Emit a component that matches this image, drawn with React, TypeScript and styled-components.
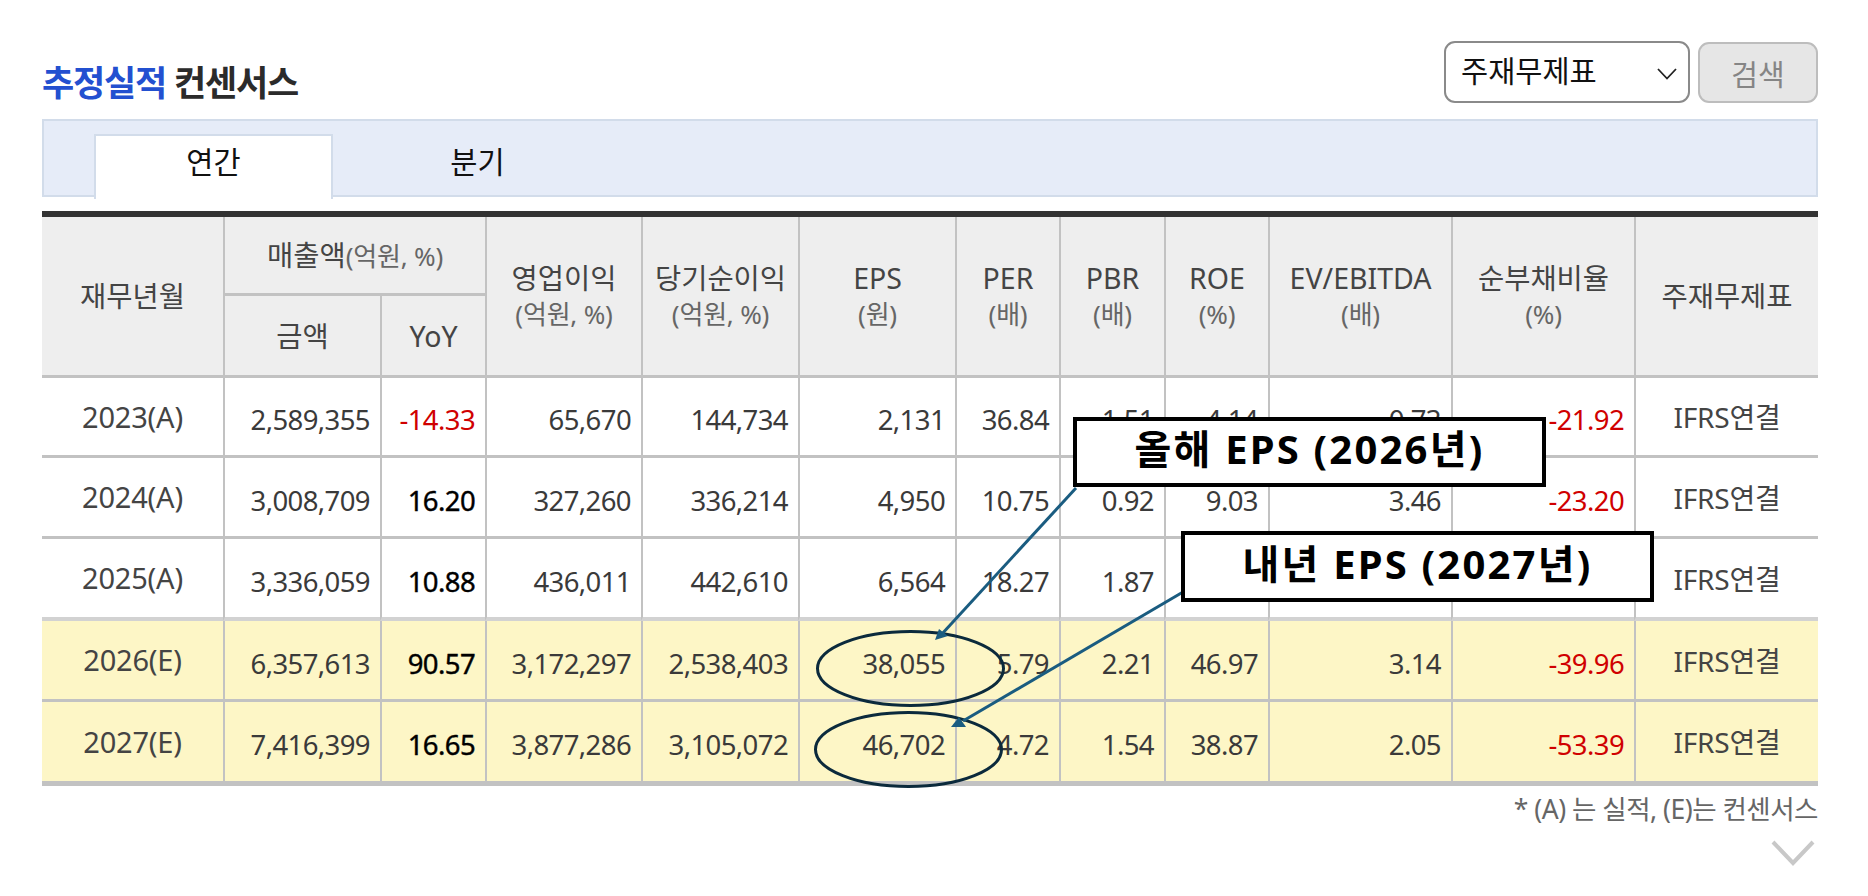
import styled, { createGlobalStyle } from "styled-components";

const FONT = `"Noto Sans", "Noto Sans CJK KR", sans-serif`;
const LINE = "#c2c2c2";

const columns = [181, 157, 105, 156, 157, 157, 104, 105, 104, 183, 183, 184];

const rows = [
  { year: "2023(A)", sales: "2,589,355", yoy: "-14.33", op: "65,670", net: "144,734", eps: "2,131", per: "36.84", pbr: "1.51", roe: "4.14", ev: "0.73", debt: "-21.92", h: 80 },
  { year: "2024(A)", sales: "3,008,709", yoy: "16.20", op: "327,260", net: "336,214", eps: "4,950", per: "10.75", pbr: "0.92", roe: "9.03", ev: "3.46", debt: "-23.20", h: 81 },
  { year: "2025(A)", sales: "3,336,059", yoy: "10.88", op: "436,011", net: "442,610", eps: "6,564", per: "18.27", pbr: "1.87", roe: "10.85", ev: "3.38", debt: "-28.44", h: 82, last: true },
  { year: "2026(E)", sales: "6,357,613", yoy: "90.57", op: "3,172,297", net: "2,538,403", eps: "38,055", per: "5.79", pbr: "2.21", roe: "46.97", ev: "3.14", debt: "-39.96", h: 81, est: true },
  { year: "2027(E)", sales: "7,416,399", yoy: "16.65", op: "3,877,286", net: "3,105,072", eps: "46,702", per: "4.72", pbr: "1.54", roe: "38.87", ev: "2.05", debt: "-53.39", h: 84, est: true, end: true },
];

const GlobalStyle = createGlobalStyle`
  * { box-sizing: border-box; }
  html, body { margin: 0; padding: 0; background: #fff; }
  body { font-family: ${FONT}; color: #333; }
`;

const Page = styled.div`
  position: relative;
  width: 1868px;
  height: 896px;
  padding: 41px 50px 0 42px;
  overflow: hidden;
`;

const TitleBar = styled.div`
  display: flex;
  justify-content: space-between;
  align-items: flex-end;
  height: 62px;
`;

const Title = styled.h2`
  margin: 0 0 -2px;
  font-size: 35px;
  line-height: 44px;
  font-weight: 700;
  letter-spacing: -1.2px;
  color: #2b2b2b;

  em {
    font-style: normal;
    color: #2350d0;
  }
`;

const SearchForm = styled.div`
  display: flex;
  gap: 8px;
`;

const SelectWrap = styled.div`
  position: relative;
  width: 246px;
  height: 62px;

  svg {
    position: absolute;
    right: 12px;
    top: 26px;
  }
`;

const Select = styled.select`
  appearance: none;
  width: 100%;
  height: 100%;
  padding: 0 0 4px 15px;
  border: 2px solid #8a8a8a;
  border-radius: 11px;
  background: #fff;
  color: #111;
  font-family: ${FONT};
  font-size: 29.5px;
`;

const SearchButton = styled.button`
  width: 120px;
  height: 61px;
  margin-top: 1px;
  border: 2px solid #bdbdbd;
  border-radius: 11px;
  background: #e6e6e6;
  color: #858585;
  font-family: ${FONT};
  font-size: 29px;
`;

const TabBand = styled.div`
  display: flex;
  gap: 25px;
  height: 78px;
  margin-top: 16px;
  padding: 13px 0 0 50px;
  border: 2px solid #d2dcea;
  background: #e6ecf8;
`;

const Tab = styled.div<{ $active?: boolean }>`
  width: 239px;
  height: 65px;
  margin-bottom: -2px;
  padding-top: 4px;
  text-align: center;
  font-size: 29.5px;
  line-height: 44px;
  color: #111;
  background: ${({ $active }) => ($active ? "#fff" : "transparent")};
  border: 2px solid ${({ $active }) => ($active ? "#d2dcea" : "transparent")};
  border-bottom: 0;
`;

const Table = styled.table`
  width: 1776px;
  margin-top: 14px;
  table-layout: fixed;
  border-collapse: separate;
  border-spacing: 0;
  border-top: 6px solid #333;
`;

const HeadCell = styled.th<{ $first?: boolean; $h?: number }>`
  height: ${({ $h }) => ($h ? `${$h}px` : "auto")};
  padding: 0;
  background: #eee;
  border-bottom: 3px solid ${LINE};
  border-left: ${({ $first }) => ($first ? "0" : `2px solid ${LINE}`)};
  font-size: 28.5px;
  font-weight: 400;
  line-height: 36px;
  color: #444;
  vertical-align: middle;
  white-space: nowrap;
`;

const Unit = styled.span<{ $block?: boolean }>`
  display: ${({ $block }) => ($block ? "block" : "inline")};
  font-size: 26px;
  letter-spacing: -0.2px;
  color: #666;
`;

const Row = styled.tr<{ $est?: boolean }>`
  background: ${({ $est }) => ($est ? "#fdf6c6" : "#fff")};
`;

const Cell = styled.td<{ $h?: number; $last?: boolean; $end?: boolean; $first?: boolean }>`
  height: ${({ $h }) => `${$h}px`};
  padding: 6px 10px 0 0;
  border-left: ${({ $first }) => ($first ? "0" : `2px solid ${LINE}`)};
  border-bottom: ${({ $last, $end }) =>
    $end ? `5px solid ${LINE}` : $last ? "4px solid #d2d2d2" : `3px solid ${LINE}`};
  text-align: right;
  font-size: 27.5px;
  letter-spacing: -0.6px;
  color: #3a3a3a;
  white-space: nowrap;
`;

const LabelCell = styled(Cell)<{ $wide?: boolean }>`
  padding: 0 0 1px;
  text-align: center;
  font-size: ${({ $wide }) => ($wide ? "29px" : "28px")};
  letter-spacing: -0.2px;
  color: #444;
`;

const Change = styled(Cell)<{ $value: number }>`
  color: ${({ $value }) => ($value < 0 ? "#d00000" : "#000")};
  -webkit-text-stroke: ${({ $value }) => ($value < 0 ? "0" : "0.4px #000")};
`;

const Debt = styled(Cell)`
  color: #d00000;
`;

const Note = styled.p`
  margin: 7px 0 0;
  text-align: right;
  font-size: 26.5px;
  line-height: 32px;
  letter-spacing: -0.5px;
  color: #666;
`;

const More = styled.div`
  display: flex;
  justify-content: flex-end;
  margin-top: 15px;
  padding-right: 3px;
`;

const Callout = styled.div<{ $left: number; $top: number; $h: number }>`
  position: absolute;
  left: ${({ $left }) => $left}px;
  top: ${({ $top }) => $top}px;
  width: 473px;
  height: ${({ $h }) => $h}px;
  border: 4px solid #000;
  background: #fff;
  color: #000;
  font-size: 40px;
  font-weight: 700;
  line-height: ${({ $h }) => $h - 14}px;
  letter-spacing: 2.2px;
  text-align: center;
  white-space: nowrap;
`;

const Marks = styled.svg`
  position: absolute;
  left: 0;
  top: 0;
  pointer-events: none;
`;

export default function App() {
  return (
    <Page>
      <GlobalStyle />
      <TitleBar>
        <Title>
          <em>추정실적</em> 컨센서스
        </Title>
        <SearchForm>
          <SelectWrap>
            <Select defaultValue="주재무제표">
              <option>주재무제표</option>
              <option>IFRS연결</option>
              <option>IFRS별도</option>
            </Select>
            <svg width="22" height="14" viewBox="0 0 22 14">
              <path d="M2 2l9 9.5L20 2" fill="none" stroke="#222" strokeWidth="1.8" />
            </svg>
          </SelectWrap>
          <SearchButton disabled>검색</SearchButton>
        </SearchForm>
      </TitleBar>

      <TabBand>
        <Tab $active>연간</Tab>
        <Tab>분기</Tab>
      </TabBand>

      <Table>
        <colgroup>
          {columns.map((w, i) => (
            <col key={i} width={w} />
          ))}
        </colgroup>
        <thead>
          <tr>
            <HeadCell $first rowSpan={2}>재무년월</HeadCell>
            <HeadCell colSpan={2} $h={79}>
              매출액<Unit>(억원, %)</Unit>
            </HeadCell>
            <HeadCell rowSpan={2}>영업이익<Unit $block>(억원, %)</Unit></HeadCell>
            <HeadCell rowSpan={2}>당기순이익<Unit $block>(억원, %)</Unit></HeadCell>
            <HeadCell rowSpan={2}>EPS<Unit $block>(원)</Unit></HeadCell>
            <HeadCell rowSpan={2}>PER<Unit $block>(배)</Unit></HeadCell>
            <HeadCell rowSpan={2}>PBR<Unit $block>(배)</Unit></HeadCell>
            <HeadCell rowSpan={2}>ROE<Unit $block>(%)</Unit></HeadCell>
            <HeadCell rowSpan={2}>EV/EBITDA<Unit $block>(배)</Unit></HeadCell>
            <HeadCell rowSpan={2}>순부채비율<Unit $block>(%)</Unit></HeadCell>
            <HeadCell rowSpan={2}>주재무제표</HeadCell>
          </tr>
          <tr>
            <HeadCell $h={82}>금액</HeadCell>
            <HeadCell $h={82}>YoY</HeadCell>
          </tr>
        </thead>
        <tbody>
          {rows.map((r) => {
            const line = { $h: r.h, $last: r.last, $end: r.end };
            return (
              <Row key={r.year} $est={r.est}>
                <LabelCell {...line} $first $wide>{r.year}</LabelCell>
                <Cell {...line}>{r.sales}</Cell>
                <Change {...line} $value={parseFloat(r.yoy)}>{r.yoy}</Change>
                <Cell {...line}>{r.op}</Cell>
                <Cell {...line}>{r.net}</Cell>
                <Cell {...line}>{r.eps}</Cell>
                <Cell {...line}>{r.per}</Cell>
                <Cell {...line}>{r.pbr}</Cell>
                <Cell {...line}>{r.roe}</Cell>
                <Cell {...line}>{r.ev}</Cell>
                <Debt {...line}>{r.debt}</Debt>
                <LabelCell {...line}>IFRS연결</LabelCell>
              </Row>
            );
          })}
        </tbody>
      </Table>

      <Note>* (A) 는 실적, (E)는 컨센서스</Note>
      <More>
        <svg width="44" height="26" viewBox="0 0 44 26">
          <path d="M2 2l20 21L42 2" fill="none" stroke="#c8c8c8" strokeWidth="4" />
        </svg>
      </More>

      <Marks width="1868" height="896" viewBox="0 0 1868 896">
        <ellipse cx="910.5" cy="668.5" rx="93" ry="37" fill="none" stroke="#0b2a3c" strokeWidth="3" />
        <ellipse cx="908.5" cy="749.5" rx="93" ry="37" fill="none" stroke="#0b2a3c" strokeWidth="3" />
        <path d="M1076 488L941 635" fill="none" stroke="#1a5c80" strokeWidth="3" />
        <path d="M935 640l4-11 9 7z" fill="#1a5c80" />
        <path d="M1183 592L963 721" fill="none" stroke="#1a5c80" strokeWidth="3" />
        <path d="M951 727l8-10 7 10z" fill="#1a5c80" />
      </Marks>

      <Callout $left={1073} $top={417} $h={70}>올해 EPS (2026년)</Callout>
      <Callout $left={1181} $top={531} $h={71}>내년 EPS (2027년)</Callout>
    </Page>
  );
}
